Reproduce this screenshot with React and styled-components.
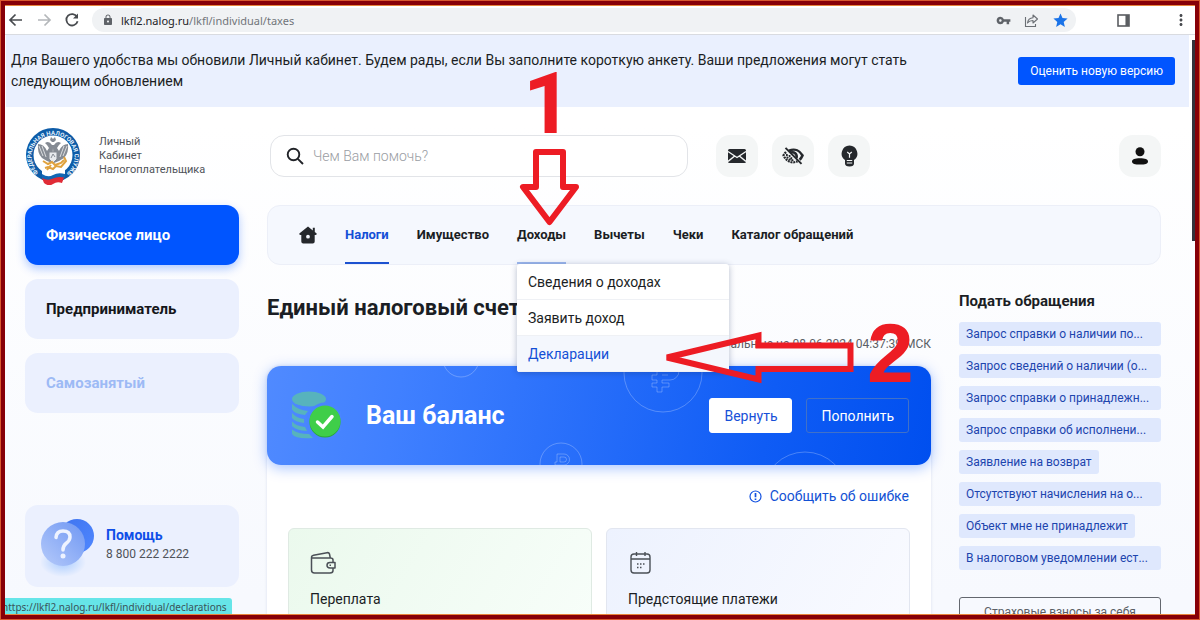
import styled, { createGlobalStyle, css } from 'styled-components';
import { MdVpnKey, MdStar, MdLock, MdMoreVert } from 'react-icons/md';

const GlobalStyle = createGlobalStyle`
  * {
    box-sizing: border-box;
  }
  body {
    margin: 0;
    font-family: Roboto, "Liberation Sans", sans-serif;
    color: #1b1e24;
  }
  button, input {
    font-family: inherit;
  }
  a {
    text-decoration: none;
    color: inherit;
  }
  h1, h2, p, ul {
    margin: 0;
    padding: 0;
  }
  ul {
    list-style: none;
  }
`;

const NAV = [
  { label: 'Налоги', active: true },
  { label: 'Имущество' },
  { label: 'Доходы', open: true },
  { label: 'Вычеты' },
  { label: 'Чеки' },
  { label: 'Каталог обращений' },
];

const REQUESTS = [
  { text: 'Запрос справки о наличии по...', full: true },
  { text: 'Запрос сведений о наличии (о...', full: true },
  { text: 'Запрос справки о принадлежн...', full: true },
  { text: 'Запрос справки об исполнени...', full: true },
  { text: 'Заявление на возврат' },
  { text: 'Отсутствуют начисления на о...', full: true },
  { text: 'Объект мне не принадлежит' },
  { text: 'В налоговом уведомлении ест...', full: true },
];

const App = () => {
  return (
    <Frame>
      <GlobalStyle />
      <BrowserBar>
        <BarButton aria-label="Назад"><ArrowIcon /></BarButton>
        <BarButton aria-label="Вперёд" $muted><ArrowIcon flip /></BarButton>
        <BarButton aria-label="Обновить"><ReloadIcon /></BarButton>
        <Address>
          <MdLock size={12} color="#5f6368" />
          <Url><b>lkfl2.nalog.ru</b>/lkfl/individual/taxes</Url>
          <MdVpnKey size={15} color="#5f6368" />
          <ShareIcon />
          <MdStar size={17} color="#1a73e8" />
        </Address>
        <BarButton aria-label="Боковая панель"><PanelIcon /></BarButton>
        <BarButton aria-label="Меню"><MdMoreVert size={18} /></BarButton>
      </BrowserBar>

      <Viewport>
        <Banner>
          <p>
            Для Вашего удобства мы обновили Личный кабинет. Будем рады, если Вы заполните короткую анкету. Ваши предложения могут стать следующим обновлением
          </p>
          <RateButton>Оценить новую версию</RateButton>
        </Banner>

        <Header>
          <Brand href="#">
            <Emblem />
            <span>Личный<br />Кабинет<br />Налогоплательщика</span>
          </Brand>
          <Search>
            <SearchIcon />
            <input type="text" placeholder="Чем Вам помочь?" aria-label="Поиск" />
          </Search>
          <Tools>
            <ToolButton aria-label="Сообщения"><MailIcon /></ToolButton>
            <ToolButton aria-label="Версия для слабовидящих"><EyeIcon /></ToolButton>
            <ToolButton aria-label="Подсказки"><BulbIcon /></ToolButton>
          </Tools>
          <ToolButton aria-label="Профиль"><UserIcon /></ToolButton>
        </Header>

        <Body>
          <Sidebar>
            <Role $state="active">Физическое лицо</Role>
            <Role>Предприниматель</Role>
            <Role $state="off">Самозанятый</Role>
            <Help>
              <QuestionIcon />
              <div>
                <HelpTitle href="#">Помощь</HelpTitle>
                <Phone>8 800 222 2222</Phone>
              </div>
            </Help>
          </Sidebar>

          <Main>
            <Nav>
              <HomeLink href="#" aria-label="Главная"><HomeIcon /></HomeLink>
              {NAV.map((item) => (
                <NavItem key={item.label}>
                  <NavLink href="#" $active={item.active} $open={item.open}>{item.label}</NavLink>
                  {item.open && (
                    <Menu>
                      <MenuLink href="#">Сведения о доходах</MenuLink>
                      <MenuLink href="#">Заявить доход</MenuLink>
                      <MenuLink href="#" $hover>Декларации</MenuLink>
                    </Menu>
                  )}
                </NavItem>
              ))}
            </Nav>

            <Columns>
              <Account>
                <Title>Единый налоговый счет</Title>
                <Updated>Актуальные на 08.06.2024 04:37:39 МСК</Updated>
                <Panel>
                  <Balance>
                    <CoinRings />
                    <CoinsIcon />
                    <BalanceTitle>Ваш баланс</BalanceTitle>
                    <BalanceButton $solid>Вернуть</BalanceButton>
                    <BalanceButton>Пополнить</BalanceButton>
                  </Balance>
                  <Report href="#"><AlertIcon />Сообщить об ошибке</Report>
                  <Cards>
                    <Card $green>
                      <WalletIcon />
                      <span>Переплата</span>
                    </Card>
                    <Card>
                      <CalendarIcon />
                      <span>Предстоящие платежи</span>
                    </Card>
                  </Cards>
                </Panel>
              </Account>

              <Aside>
                <AsideTitle>Подать обращения</AsideTitle>
                <Tags>
                  {REQUESTS.map(({ text, full }) => (
                    <li key={text}><Tag href="#" $full={full}>{text}</Tag></li>
                  ))}
                </Tags>
                <OutlineButton>Страховые взносы за себя</OutlineButton>
              </Aside>
            </Columns>
          </Main>
        </Body>
        <ScrollThumb />
      </Viewport>

      <StatusUrl>https://lkfl2.nalog.ru/lkfl/individual/declarations</StatusUrl>
      <Digit $x={523} $y={56}>1</Digit>
      <Digit $x={867} $y={305} $wide>2</Digit>
      <Arrows viewBox="0 0 1200 620" aria-hidden="true">
        <path d="M536 152H563V187H576L549.500 222L523 187H536Z" />
        <path d="M667 357.500L758.500 335.500V345.500H850.500V369H758.500V379.500Z" strokeLinejoin="miter" />
      </Arrows>
    </Frame>
  );
};

/* icons */

const ArrowIcon = ({ flip }) => (
  <svg width="16" height="16" viewBox="0 0 16 16" fill="none" stroke="currentColor" strokeWidth="1.7">
    <path d={flip ? 'M2 8H13.500M8.500 2.500L14 8L8.500 13.500' : 'M14 8H2.500M7.500 2.500L2 8L7.500 13.500'} />
  </svg>
);

const ReloadIcon = () => (
  <svg width="16" height="16" viewBox="0 0 16 16" fill="none" stroke="currentColor" strokeWidth="1.800">
    <path d="M13 4.800A5.700 5.700 0 1 0 13.600 9.300" />
    <path d="M14 1.500V6.500H9Z" fill="currentColor" stroke="none" />
  </svg>
);

const ShareIcon = () => (
  <svg width="15" height="15" viewBox="0 0 15 15" fill="none" stroke="#6b6f74" strokeWidth="1.100">
    <path d="M1.500 4V13.500H11.500V11" />
    <path d="M3.500 10C4 6.500 6 5 9 4.800V2L13.500 6L9 10V7.500C6.500 7.500 5 8 3.500 10Z" strokeLinejoin="round" />
  </svg>
);

const PanelIcon = () => (
  <svg width="13" height="13" viewBox="0 0 13 13" fill="none" stroke="#5a5d61">
    <rect x="1" y="1" width="11" height="11" strokeWidth="1.600" />
    <path d="M10.200 1V12" strokeWidth="3.500" />
  </svg>
);

const SearchIcon = () => (
  <svg width="18" height="18" viewBox="0 0 18 18" fill="none" stroke="#212328" strokeWidth="1.900">
    <circle cx="7.500" cy="7.500" r="5.800" />
    <path d="M11.800 11.800L17 17" />
  </svg>
);

const MailIcon = () => (
  <svg width="18" height="14" viewBox="0 0 18 14">
    <rect width="18" height="14" rx="1.500" fill="#25282c" />
    <path d="M0 2.500L9 8.500L18 2.500M0 12.500L7 6.800M18 12.500L11 6.800" fill="none" stroke="#f4f6f6" strokeWidth="1.400" />
  </svg>
);

const EyeIcon = () => (
  <svg width="22" height="18" viewBox="0 0 22 18" fill="none" stroke="#25282c">
    <path d="M7 3.800C13 1 18 4 20.500 8.500C19.800 10.200 18.800 11.600 17.600 12.700M8.500 5.800C12 4.200 15.500 7 14.500 11" strokeWidth="2.600" />
    <path d="M4 5C3 6 2 7.200 1.500 8.500C5 15.500 11 16.500 15.500 14.200" strokeWidth="2.200" strokeDasharray="2 0.800" />
    <path d="M5 7C4 11 8 14 12 13M7.500 8C7.500 10.500 9 11.500 11 11.500" strokeWidth="1.800" strokeDasharray="2 0.800" />
    <path d="M3.500 0.800L19.500 16.800" strokeWidth="1.900" />
  </svg>
);

const BulbIcon = () => (
  <svg width="17" height="22" viewBox="0 0 17 22">
    <path d="M8.500 0.500A8 8 0 0 0 4 15V18.500Q4 21.500 8.500 21.500T13 18.500V15A8 8 0 0 0 8.500 0.500Z" fill="#25282c" />
    <path d="M6.200 7L8.500 9L10.800 7M8.500 9V12.800M5.800 15.500H11.200M5.800 18H11.200" fill="none" stroke="#f4f6f6" strokeWidth="1.200" />
  </svg>
);

const UserIcon = () => (
  <svg width="18" height="18" viewBox="0 0 18 18" fill="#111">
    <circle cx="9" cy="4.800" r="4.500" />
    <path d="M1 14.500C1 12 4 11.200 9 11.200S17 12 17 14.500S14 17.500 9 17.500S1 17 1 14.500Z" />
  </svg>
);

const HomeIcon = () => (
  <svg width="18" height="18" viewBox="0 0 18 18" fill="#25282c">
    <path fillRule="evenodd" d="M9 0.500L0.300 7.500Q0 9.300 2.300 9V15.500Q2.300 17.500 4.300 17.500H13.700Q15.700 17.500 15.700 15.500V9Q18 9.300 17.700 7.500L15.800 6V1.800H13.800V4.400ZM9 8.800A1.900 1.900 0 1 1 9 12.600A1.900 1.900 0 1 1 9 8.800Z" />
  </svg>
);

const AlertIcon = () => (
  <svg width="13" height="13" viewBox="0 0 13 13" fill="none" stroke="#1251e0">
    <circle cx="6.500" cy="6.500" r="5.500" strokeWidth="1.200" />
    <path d="M6.500 3V7.300M6.500 8.500V10" strokeWidth="1.700" />
  </svg>
);

const WalletIcon = () => (
  <svg width="26" height="24" viewBox="0 0 26 24" fill="none" stroke="#4b5057" strokeWidth="1.500" strokeLinejoin="round">
    <path d="M1.500 6.500V19Q1.500 22 4.500 22H20Q23 22 23 19.500V17M23 11.500V9Q23 7 20.500 7H3Q1.500 7 1.500 6Q1.500 4.800 3.500 4.300L17 1.700Q19 1.300 19.500 3L20.300 7" />
    <path d="M25 11.500H20Q17 11.500 17 14.200T20 17H25Z" />
    <path d="M19.500 14.200H21" />
  </svg>
);

const CalendarIcon = () => (
  <svg width="24" height="24" viewBox="-2 0 24 24" fill="none" stroke="#4b5057" strokeWidth="1.400">
    <rect x="1" y="3" width="19" height="19" rx="3" />
    <path d="M1 8H20M6.500 1V5M15 1V5" />
    <path d="M7 13H8.500M10 13H11.500M13 13H14.500M7 16.500H8.500M10 16.500H11.500" strokeWidth="1.600" />
  </svg>
);

const QuestionIcon = () => (
  <svg width="56" height="66" viewBox="0 0 56 66" fill="none">
    <defs>
      <linearGradient id="qBack" x1="0" y1="0" x2="1" y2="1">
        <stop offset="0" stopColor="#3f74ef" />
        <stop offset="1" stopColor="#4f87ff" />
      </linearGradient>
      <linearGradient id="qFront" x1="1" y1="0" x2="0" y2="1">
        <stop offset="0" stopColor="#6f97f3" />
        <stop offset="1" stopColor="#b5cafa" />
      </linearGradient>
      <radialGradient id="qGlow">
        <stop offset="0" stopColor="#a9ccff" />
        <stop offset="1" stopColor="#a9ccff" stopOpacity="0" />
      </radialGradient>
    </defs>
    <ellipse cx="22" cy="51" rx="23" ry="15" fill="url(#qGlow)" />
    <circle cx="36" cy="25" r="17" fill="url(#qBack)" />
    <circle cx="22" cy="33" r="22" fill="url(#qFront)" />
    <path d="M15 26.500Q15.500 20 22 20Q29 20 29 26Q29 29.500 25 32.500Q22 34.800 22 39" stroke="#eef3ff" strokeWidth="3.500" strokeLinecap="round" />
    <circle cx="22" cy="45" r="2.500" fill="#eef3ff" />
  </svg>
);

const CoinsIcon = () => (
  <svg width="52" height="50" viewBox="0 0 52 50" fill="none">
    <g fill="#57b3bd">
      <ellipse cx="20" cy="8" rx="17" ry="7.500" />
      <path d="M3 13Q9 19 19 20L16 24Q6 23 3 18.500ZM3 22Q7 27 15 28V32Q6 31 3 27ZM3 30.500Q7 35 16 36L18 40Q7 39.500 3 35ZM3 38.500Q9 43 20 43L24 47Q7 48.500 3 43Z" />
      <path d="M37 11V15Q31 15 26 17Q34 15.500 37 11Z" />
    </g>
    <circle cx="36" cy="30" r="18.500" fill="#4985ff" />
    <circle cx="36" cy="31" r="15.500" fill="#2ba63b" />
    <circle cx="36" cy="30" r="15.500" fill="#3fce49" />
    <path d="M28.500 31L34 36L43 25.500" stroke="#fff" strokeWidth="3.500" strokeLinecap="round" />
  </svg>
);

const CoinRings = () => (
  <Rings viewBox="0 0 664 99" preserveAspectRatio="xMidYMid slice" aria-hidden="true">
    <circle cx="194" cy="-7" r="18" />
    <circle cx="396" cy="7" r="39" />
    <circle cx="294" cy="98" r="21" />
    <circle cx="538" cy="128" r="42" />
    <path d="M388 -4H403A9 9 0 0 1 403 14H395V17H402V21H395V26H390V21H385V17H390V14H385V9H390V-4M395 9H401" />
    <path d="M290 88H297A5 5 0 0 1 297 99H288V96H290ZM293 91H297A2.500 2.500 0 0 1 297 96H293Z" />
  </Rings>
);

const Emblem = () => (
  <svg width="56" height="58" viewBox="0 0 56 58">
    <defs>
      <path id="sealArc" d="M13.500 45.500A21.500 21.500 0 1 1 42.500 45.500" />
    </defs>
    <circle cx="28" cy="28" r="27" fill="#0d5ca8" />
    <circle cx="28" cy="28" r="19.500" fill="#fff" />
    <text fontSize="6" fontWeight="700" fill="#e4f0fb" fontFamily="Roboto, sans-serif">
      <textPath href="#sealArc">ФЕДЕРАЛЬНАЯ НАЛОГОВАЯ СЛУЖБА</textPath>
    </text>
    <g fill="#858b94">
      <path d="M27 18Q24 13 20 16L22 18L24 21L22 24Q19 17 13 17Q12 26 17 31L22 34L27 36L28 21L29 36L34 34L39 31Q44 26 43 17Q37 17 34 24L32 21L34 18L36 16Q32 13 29 18Z" />
      <path d="M25 13L26 10L28 12L30 10L31 13L29 15H27Z" />
    </g>
    <path d="M14 19L18 29M17 19L21 30M42 19L38 29M39 19L35 30" stroke="#fff" strokeWidth="0.700" />
    <path d="M24 25H32V32L28 36L24 32Z" fill="#e8ebef" stroke="#858b94" />
    <path d="M26 31L28 27L30 30" stroke="#858b94" fill="none" />
    <path d="M18 34L23 37L27 35L30 38L36 36L39 33M39 30L41 34L36 40L31 39L28 42L23 40L20 41M22 43L26 38" stroke="#e0a23e" strokeWidth="2" fill="none" />
    <path d="M17 43Q23 47 28 44T40 43V48Q34 46 29 49T17 48Z" fill="#fff" />
    <path d="M17 47Q23 51 28 48T40 47V51Q34 49 29 52T17 51Z" fill="#1267b4" />
    <path d="M17 51Q23 54 28 51.500T39 50.500L37 56Q32 54 28 57T19 56Z" fill="#e02b36" />
  </svg>
);

/* page frame */

const Frame = styled.div`
  position: relative;
  display: flex;
  flex-direction: column;
  height: 100vh;
  overflow: hidden;
  border: 5px solid #870008;
  outline: 1px solid #d9592f;
  outline-offset: -1px;
  background: #fff;
  &::after {
    content: "";
    position: absolute;
    inset: 0;
    z-index: 5;
    border-bottom: 1px solid #e8843c;
    pointer-events: none;
  }
`;

const BrowserBar = styled.div`
  display: flex;
  align-items: center;
  gap: 12px;
  height: 30px;
  flex-shrink: 0;
  padding: 0 5px 0 3px;
  border-top: 1px solid #e8843c;
  border-bottom: 1px solid #d9dbe0;
`;

const BarButton = styled.button`
  display: flex;
  padding: 0;
  border: 0;
  background: none;
  color: ${(p) => (p.$muted ? '#b4b7ba' : '#484b4f')};
`;

const Address = styled.div`
  display: flex;
  align-items: center;
  gap: 13px;
  flex: 1;
  height: 24px;
  margin-right: 29px;
  padding: 0 7px 0 10px;
  border-radius: 12px;
  background: #f0f2f4;
  & + button {
    margin-right: 30px;
  }
`;

const Url = styled.span`
  flex: 1;
  margin-left: -6px;
  font-family: "Noto Sans", "Open Sans", sans-serif;
  font-size: 11px;
  color: #70757a;
  b {
    font-weight: 400;
    color: #202124;
  }
`;

const Viewport = styled.div`
  position: relative;
  flex: 1;
  min-height: 0;
  overflow: hidden;
  padding-right: 6px;
  background: linear-gradient(180deg, #fff 90px, #f7f9fe 560px);
`;

const ScrollThumb = styled.div`
  position: absolute;
  top: 5px;
  right: 0;
  width: 3px;
  height: 201px;
  background: #33323c;
`;

const Banner = styled.div`
  display: flex;
  align-items: center;
  justify-content: space-between;
  gap: 32px;
  height: 72px;
  margin-left: 1px;
  padding: 0 14px 0 5px;
  background: #eaf0fe;
  p {
    max-width: 940px;
    font-size: 14px;
    line-height: 21px;
  }
`;

const RateButton = styled.button`
  flex-shrink: 0;
  height: 28px;
  padding: 0 12px;
  border: 0;
  border-radius: 3px;
  background: #0055ff;
  color: #fff;
  font-size: 12px;
`;

const Header = styled.header`
  display: flex;
  align-items: center;
  height: 98px;
  padding: 0 28px 0 20px;
`;

const Brand = styled.a`
  display: flex;
  align-items: center;
  gap: 18px;
  width: 245px;
  font-size: 11px;
  line-height: 14px;
  color: #4f5359;
`;

const Search = styled.label`
  display: flex;
  align-items: center;
  gap: 8px;
  flex: 0 1 418px;
  height: 42px;
  padding: 0 15px;
  border: 1px solid #e2e4e8;
  border-radius: 14px;
  background: #fff;
  input {
    flex: 1;
    min-width: 0;
    padding: 0 1px;
    border: 0;
    outline: 0;
    background: none;
    font-size: 14px;
    font-weight: 300;
  }
  input::placeholder {
    color: #9a9da3;
  }
`;

const Tools = styled.div`
  display: flex;
  gap: 14px;
  flex: 1;
  margin-left: 28px;
`;

const ToolButton = styled.button`
  display: flex;
  align-items: center;
  justify-content: center;
  width: 42px;
  height: 42px;
  padding: 0;
  border: 0;
  border-radius: 14px;
  background: #f4f6f6;
`;

const Body = styled.div`
  display: grid;
  grid-template-columns: 214px 1fr;
  gap: 28px;
  padding: 0 28px 0 20px;
`;

const Sidebar = styled.aside`
  display: flex;
  flex-direction: column;
  gap: 14px;
`;

const Role = styled.button`
  height: 60px;
  padding: 0 21px;
  border: 0;
  border-radius: 13px;
  background: #ebf0fe;
  color: #15171b;
  font-size: 15px;
  font-weight: 700;
  text-align: left;
  ${(p) => p.$state === 'active' && css`
    background: #0055ff;
    color: #fff;
    box-shadow: 0 4px 10px rgba(0, 85, 255, 0.3);
  `}
  ${(p) => p.$state === 'off' && css`
    color: #9dbaf5;
  `}
`;

const Help = styled.div`
  display: flex;
  align-items: center;
  gap: 9px;
  height: 82px;
  margin-top: 78px;
  padding: 0 16px 4px;
  border-radius: 13px;
  background: #ebf0fe;
`;

const HelpTitle = styled.a`
  display: block;
  color: #0f4fe8;
  font-size: 14px;
  font-weight: 700;
  line-height: 20px;
`;

const Phone = styled.p`
  font-size: 12px;
  line-height: 18px;
  color: #4f5359;
`;

const Main = styled.main`
  min-width: 0;
`;

const Nav = styled.nav`
  display: flex;
  gap: 28px;
  height: 60px;
  padding: 0 31px;
  border: 1px solid #eceff8;
  border-radius: 13px;
  background: #f5f8fe;
`;

const HomeLink = styled.a`
  display: flex;
  align-items: center;
`;

const NavItem = styled.div`
  position: relative;
`;

const NavLink = styled.a`
  display: flex;
  align-items: center;
  height: 58px;
  border-bottom: 2px solid transparent;
  font-size: 13px;
  font-weight: 700;
  ${(p) => p.$active && css`
    color: #134fd6;
    border-color: #1d52d0;
  `}
  ${(p) => p.$open && css`
    border-color: #9db8ee;
  `}
`;

const Menu = styled.div`
  position: absolute;
  top: 58px;
  left: 0;
  z-index: 2;
  width: 212px;
  border-radius: 3px;
  background: #fff;
  box-shadow: 0 1px 6px rgba(20, 40, 90, 0.3);
  overflow: hidden;
`;

const MenuLink = styled.a`
  display: flex;
  align-items: center;
  height: 36px;
  padding: 0 11px;
  border-bottom: 1px solid #eff1f5;
  font-size: 14px;
  ${(p) => p.$hover && css`
    background: #f4f7fd;
    color: #134fd6;
  `}
`;

const Columns = styled.div`
  display: grid;
  grid-template-columns: 1fr 202px;
  gap: 28px;
`;

const Account = styled.section`
  min-width: 0;
`;

const Title = styled.h1`
  margin-top: 29px;
  font-size: 22px;
  line-height: 28px;
  font-weight: 700;
`;

const Updated = styled.p`
  margin: 13px 0;
  text-align: right;
  font-size: 12px;
  line-height: 18px;
  color: #5b5f66;
`;

const Panel = styled.div`
  display: flex;
  flex-direction: column;
  min-height: 300px;
  border-radius: 14px;
  background: #fff;
  box-shadow: 0 0 3px rgba(40, 70, 140, 0.15);
`;

const Balance = styled.div`
  position: relative;
  display: flex;
  align-items: center;
  gap: 14px;
  height: 99px;
  padding: 0 22px;
  border-radius: 14px;
  background: linear-gradient(100deg, #508aff, #4080ff 20%, #0f5cf5 75%, #004fef);
  box-shadow: 0 3px 14px rgba(0, 85, 255, 0.35);
  svg {
    flex-shrink: 0;
  }
`;

const Rings = styled.svg`
  position: absolute;
  inset: 0;
  width: 100%;
  height: 100%;
  fill: none;
  stroke: rgba(255, 255, 255, 0.25);
`;

const BalanceTitle = styled.h2`
  flex: 1;
  margin-left: 11px;
  color: #fff;
  font-size: 25px;
  font-weight: 700;
`;

const BalanceButton = styled.button`
  position: relative;
  height: 35px;
  padding: 0 14px;
  border: 1px solid ${(p) => (p.$solid ? '#fff' : '#4171c8')};
  border-radius: 3px;
  background: ${(p) => (p.$solid ? '#fff' : 'transparent')};
  color: ${(p) => (p.$solid ? '#1750d8' : '#fff')};
  font-size: 14px;
`;

const Report = styled.a`
  display: flex;
  align-items: center;
  align-self: flex-end;
  gap: 8px;
  margin: 21px 22px 22px 0;
  line-height: 20px;
  font-size: 14px;
  color: #1251d4;
`;

const Cards = styled.div`
  display: grid;
  grid-template-columns: 1fr 1fr;
  gap: 14px;
  padding: 0 21px;
`;

const Card = styled.div`
  display: flex;
  flex-direction: column;
  align-items: flex-start;
  gap: 14px;
  height: 140px;
  padding: 22px 21px;
  border: 1px solid ${(p) => (p.$green ? '#dfeae3' : '#e2e6f0')};
  border-radius: 6px;
  background: ${(p) => (p.$green
    ? 'linear-gradient(120deg, #ebf9ed, #f8fefa)'
    : 'linear-gradient(120deg, #edf2fe, #fafbff)')};
  font-size: 14px;
  line-height: 20px;
`;

const Aside = styled.aside`
  min-width: 0;
`;

const AsideTitle = styled.h2`
  margin: 26px 0 10px;
  font-size: 15px;
  line-height: 21px;
  font-weight: 700;
`;

const Tags = styled.ul`
  display: flex;
  flex-direction: column;
  gap: 8px;
  li {
    display: flex;
  }
`;

const Tag = styled.a`
  flex: ${(p) => (p.$full ? '1' : '0 0 auto')};
  padding: 0 7px;
  border-radius: 3px;
  background: #dfe8fd;
  color: #1d45ae;
  font-size: 12px;
  line-height: 24px;
  white-space: nowrap;
`;

const OutlineButton = styled.button`
  width: 100%;
  height: 30px;
  margin-top: 27px;
  border: 1px solid #63676e;
  border-radius: 3px;
  background: none;
  color: #5b5f66;
  font-size: 12px;
`;

/* overlays */

const StatusUrl = styled.div`
  position: absolute;
  left: 0;
  bottom: 0;
  z-index: 3;
  height: 17px;
  padding-right: 5px;
  display: flex;
  align-items: center;
  border-radius: 0 3px 0 0;
  background: #66e5e8;
  color: #3a5358;
  font-family: "Noto Sans", "Open Sans", sans-serif;
  font-size: 10px;
  text-indent: -3px;
  overflow: hidden;
`;

const Digit = styled.span`
  position: absolute;
  left: ${(p) => p.$x - 5}px;
  top: ${(p) => p.$y - 5}px;
  z-index: 4;
  color: #ed1c24;
  font-family: ${(p) => (p.$wide ? '"Liberation Sans"' : 'Roboto')}, sans-serif;
  font-size: ${(p) => (p.$wide ? 84 : 86)}px;
  line-height: 96px;
  font-weight: 700;
`;

const Arrows = styled.svg`
  position: absolute;
  top: -5px;
  left: -5px;
  z-index: 4;
  width: 1200px;
  height: 620px;
  fill: none;
  stroke: #ed1c24;
  stroke-width: 6;
  stroke-linejoin: round;
  pointer-events: none;
`;

export default App;
